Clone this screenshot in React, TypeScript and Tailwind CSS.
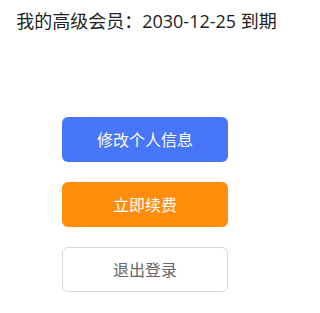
export default function App() {
  return (
    <div
      className="w-[304px] h-[313px] bg-white"
      style={{ fontFamily: '"Open Sans", "Noto Sans CJK SC", sans-serif' }}
    >
      <div className="w-[293px] pt-[9px] flex justify-center">
        <p className="text-[18px] leading-[24px] text-[#222]">
          我的高级会员：2030-12-25 到期
        </p>
      </div>
      <div className="w-[290px] mt-[84px] flex flex-col items-center gap-[20px]">
        <button className="w-[166px] h-[45px] rounded-[6px] bg-[#4876f9] text-white text-[16px]">
          修改个人信息
        </button>
        <button className="w-[166px] h-[45px] rounded-[6px] bg-[#ff8c0a] text-white text-[16px]">
          立即续费
        </button>
        <button className="w-[166px] h-[45px] rounded-[6px] border border-[#d9d9d9] bg-white text-[#666] text-[16px]">
          退出登录
        </button>
      </div>
    </div>
  )
}
